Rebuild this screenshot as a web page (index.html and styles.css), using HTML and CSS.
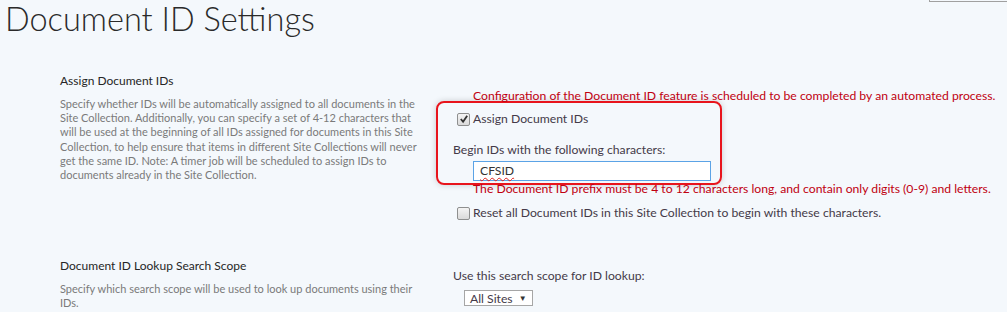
FILE: index.html
```html
<!DOCTYPE html>
<html lang="en">
<head>
    <meta charset="UTF-8">
    <title>Document ID Settings</title>
    <link rel="stylesheet" href="styles.css">
</head>
<body>
    <div class="corner-box"></div>
    <h1 class="page-title">Document ID Settings</h1>

    <div class="section">
        <div class="section-info">
            <h3>Assign Document IDs</h3>
            <p>Specify whether IDs will be automatically assigned to all documents in the<br>
            Site Collection. Additionally, you can specify a set of 4-12 characters that<br>
            will be used at the beginning of all IDs assigned for documents in this Site<br>
            Collection, to help ensure that items in different Site Collections will never<br>
            get the same ID. Note: A timer job will be scheduled to assign IDs to<br>
            documents already in the Site Collection.</p>
        </div>
        <div class="section-body">
            <div class="notice">Configuration of the Document ID feature is scheduled to be completed by an automated process.</div>
            <div class="highlight-box">
                <label class="check-row">
                    <input type="checkbox" checked>
                    <span>Assign Document IDs</span>
                </label>
                <div class="field-label">Begin IDs with the following characters:</div>
                <div class="text-box"><span class="misspelled">CFSID</span></div>
            </div>
            <div class="notice second-notice">The Document ID prefix must be 4 to 12 characters long, and contain only digits (0-9) and letters.</div>
            <label class="check-row reset-row">
                <input type="checkbox">
                <span>Reset all Document IDs in this Site Collection to begin with these characters.</span>
            </label>
        </div>
    </div>

    <div class="section lookup">
        <div class="section-info">
            <h3>Document ID Lookup Search Scope</h3>
            <p>Specify which search scope will be used to look up documents using their<br>
            IDs.</p>
        </div>
        <div class="section-body">
            <div class="field-label scope-label">Use this search scope for ID lookup:</div>
            <div class="scope-select">All Sites <span class="arrow">&#9660;</span></div>
        </div>
    </div>
</body>
</html>
```

FILE: styles.css
```css
* {
    margin: 0;
    padding: 0;
    box-sizing: border-box;
}

body {
    font-family: 'Lato', 'Open Sans', sans-serif;
    color: #444;
    background: #f4f8fc;
    width: 1007px;
    height: 312px;
    overflow: hidden;
    position: relative;
}

.corner-box {
    position: absolute;
    top: 0;
    left: 929px;
    width: 78px;
    height: 2px;
    border-left: 1px solid #a0a0a0;
    border-bottom: 1px solid #a0a0a0;
}

.page-title {
    font-weight: 300;
    font-size: 32.5px;
    color: #2a2a2a;
    padding-left: 5px;
    line-height: 38px;
}

.section {
    display: flex;
    padding-left: 60px;
    margin-top: 35px;
}

.section.lookup {
    margin-top: 36px;
}

.section-info {
    width: 376px;
}

.section-info h3 {
    font-weight: 400;
    font-size: 12px;
    color: #262626;
    line-height: 16px;
    margin-bottom: 8px;
}

.section-info p {
    font-size: 11px;
    line-height: 14.2px;
    color: #7a7a7a;
    white-space: nowrap;
}

.section-body {
    padding-top: 15px;
    font-size: 12.2px;
}

.notice {
    color: #c00010;
    padding-left: 37px;
    line-height: 16px;
    white-space: nowrap;
}

.second-notice {
    margin-top: -4px;
}

.highlight-box {
    width: 286px;
    margin-top: -3px;
    padding: 7px 0 2px 15px;
    border: 2px solid #e8141c;
    border-radius: 8px;
    box-shadow: 0 0 6px rgba(0, 0, 0, 0.18);
}

.check-row {
    display: flex;
    align-items: center;
    gap: 3px;
    padding-left: 4px;
    line-height: 18px;
    color: #443a48;
}

.check-row input {
    appearance: none;
    width: 13px;
    height: 13px;
    margin: 0;
    border: 1px solid #8e8f8f;
    border-radius: 2px;
    background: linear-gradient(#f4f4f4, #dadada);
}

.check-row input:checked {
    background: url("data:image/svg+xml,%3Csvg xmlns='http://www.w3.org/2000/svg' viewBox='0 0 11 11'%3E%3Cpath d='M2 5.5 L4.5 8.5 L9 2' fill='none' stroke='%23333' stroke-width='2'/%3E%3C/svg%3E") center / 10px no-repeat, linear-gradient(#f4f4f4, #dadada);
}

.reset-row {
    margin-top: 7px;
    padding-left: 21px;
}

.field-label {
    color: #443a48;
    margin-top: 14px;
    line-height: 16px;
}

.text-box {
    margin: 3px 0 0 20px;
    width: 238px;
    height: 20px;
    border: 1px solid #5ba3e6;
    background: #fff;
    padding: 0 6px;
    line-height: 18px;
    color: #333;
}

.misspelled {
    text-decoration: underline wavy #e0201c;
    text-decoration-thickness: 1px;
    text-underline-offset: 2px;
}

.lookup .section-body {
    padding-top: 10px;
}

.scope-label {
    margin-top: 0;
    padding-left: 17px;
}

.scope-select {
    display: inline-flex;
    align-items: center;
    gap: 6px;
    margin: 6px 0 0 28px;
    height: 16px;
    padding: 0 5px 0 5px;
    border: 1px solid #a6a6a6;
    background: #fff;
    color: #443a48;
}

.scope-select .arrow {
    font-size: 8px;
    color: #333;
}
```
